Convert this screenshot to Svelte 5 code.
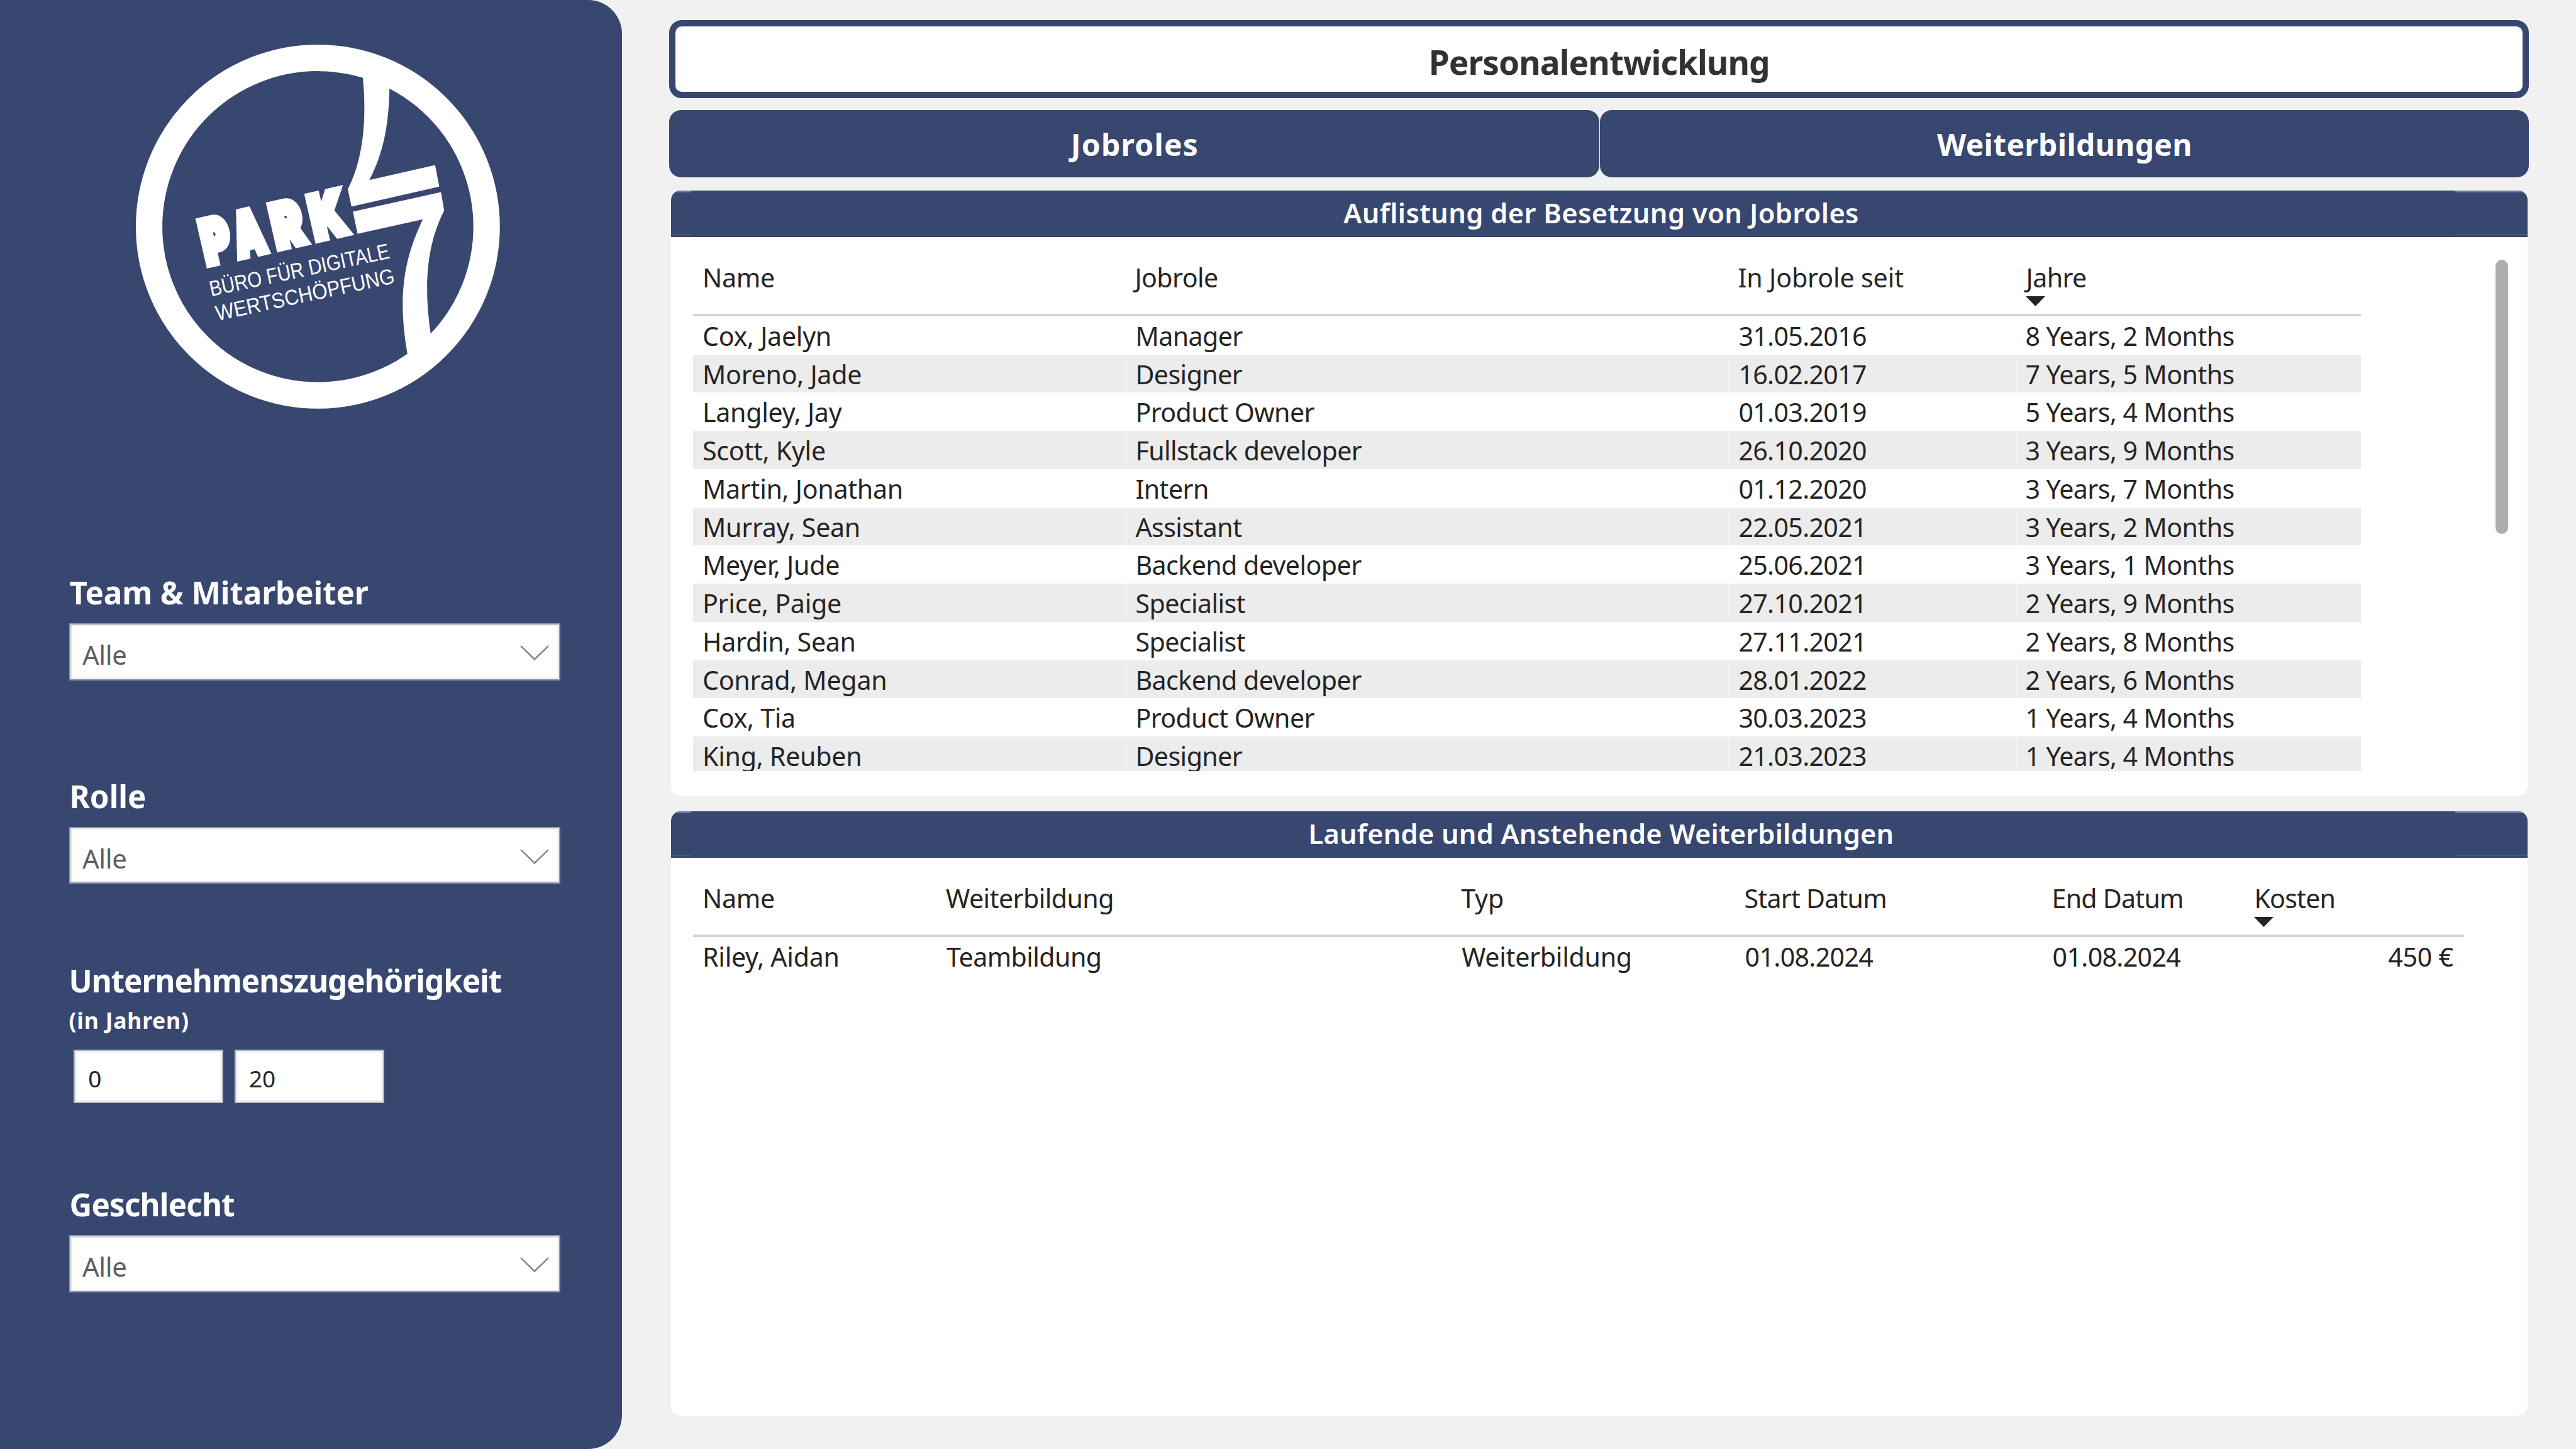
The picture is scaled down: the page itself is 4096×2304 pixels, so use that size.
<script>
  const jobroles = [
    ['Cox, Jaelyn', 'Manager', '31.05.2016', '8 Years, 2 Months'],
    ['Moreno, Jade', 'Designer', '16.02.2017', '7 Years, 5 Months'],
    ['Langley, Jay', 'Product Owner', '01.03.2019', '5 Years, 4 Months'],
    ['Scott, Kyle', 'Fullstack developer', '26.10.2020', '3 Years, 9 Months'],
    ['Martin, Jonathan', 'Intern', '01.12.2020', '3 Years, 7 Months'],
    ['Murray, Sean', 'Assistant', '22.05.2021', '3 Years, 2 Months'],
    ['Meyer, Jude', 'Backend developer', '25.06.2021', '3 Years, 1 Months'],
    ['Price, Paige', 'Specialist', '27.10.2021', '2 Years, 9 Months'],
    ['Hardin, Sean', 'Specialist', '27.11.2021', '2 Years, 8 Months'],
    ['Conrad, Megan', 'Backend developer', '28.01.2022', '2 Years, 6 Months'],
    ['Cox, Tia', 'Product Owner', '30.03.2023', '1 Years, 4 Months'],
    ['King, Reuben', 'Designer', '21.03.2023', '1 Years, 4 Months'],
  ];
  const trainings = [
    ['Riley, Aidan', 'Teambildung', 'Weiterbildung', '01.08.2024', '01.08.2024', '450 €'],
  ];
  const jobHead = ['Name', 'Jobrole', 'In Jobrole seit', 'Jahre'];
  const trainHead = ['Name', 'Weiterbildung', 'Typ', 'Start Datum', 'End Datum', 'Kosten'];
</script>

{#snippet dropdown()}
  <div class="select">
    <span>Alle</span>
    <svg class="chevron" viewBox="0 0 46 24"><path d="M1 1 L23 22.4 L45 1" /></svg>
  </div>
{/snippet}

{#snippet table(kind, head, rows)}
  <div class="table {kind}">
    <div class="row head">
      {#each head as label, i}
        <div class="cell">
          <span class="label">{label}</span>
          {#if i === head.length - 1}
            <svg class="sort" viewBox="0 0 31 16"><path d="M0 0H31L15.5 16Z" /></svg>
          {/if}
        </div>
      {/each}
    </div>
    <div class="body">
      {#each rows as row}
        <div class="row">
          {#each row as value}
            <div class="cell" class:num={/^\d\d\./.test(value)}>{value}</div>
          {/each}
        </div>
      {/each}
    </div>
  </div>
{/snippet}

<div class="page">
  <aside>
    <svg class="logo" viewBox="43 36 1484 1484">
      <circle cx="785" cy="778" r="688" fill="none" stroke="#fff" stroke-width="108" />
      <path d="M968 165 C986 345 968 510 907 625 L922 696 L1280 615 L1263 527 L995 588 C1050 480 1074 375 1077 212 L1040 150 Z" />
      <path d="M928 717 L1287 637 L1300 712 C1225 860 1217 1030 1246 1222 L1200 1320 L1151 1302 C1114 1090 1125 930 1213 748 L947 807 Z" />
      <text class="brand" transform="translate(329 933) rotate(-12.85)"><tspan x="3" textLength="114" lengthAdjust="spacingAndGlyphs">P</tspan><tspan x="137" textLength="122" lengthAdjust="spacingAndGlyphs">A</tspan><tspan x="298" textLength="124" lengthAdjust="spacingAndGlyphs">R</tspan><tspan x="458" textLength="140" lengthAdjust="spacingAndGlyphs">K</tspan></text>
      <text class="claim" transform="translate(350 1062) rotate(-12.05)" textLength="748" lengthAdjust="spacingAndGlyphs">BÜRO FÜR DIGITALE</text>
      <text class="claim" transform="translate(375 1162) rotate(-12.05)" textLength="744" lengthAdjust="spacingAndGlyphs">WERTSCHÖPFUNG</text>
    </svg>

    <section class="filter team">
      <h3>Team &amp; Mitarbeiter</h3>
      {@render dropdown()}
    </section>
    <section class="filter role">
      <h3>Rolle</h3>
      {@render dropdown()}
    </section>
    <section class="filter tenure">
      <h3>Unternehmenszugehörigkeit</h3>
      <p>(in Jahren)</p>
      <div class="range">
        <div class="input">0</div>
        <div class="input">20</div>
      </div>
    </section>
    <section class="filter gender">
      <h3>Geschlecht</h3>
      {@render dropdown()}
    </section>
  </aside>

  <main>
    <h1>Personalentwicklung</h1>
    <nav>
      <div class="tab active">Jobroles</div>
      <div class="tab">Weiterbildungen</div>
    </nav>
    <section class="panel first">
      <h2>Auflistung der Besetzung von Jobroles</h2>
      <div class="content">
        {@render table('jobs', jobHead, jobroles)}
        <div class="scrollbar"></div>
      </div>
    </section>
    <section class="panel second">
      <h2>Laufende und Anstehende Weiterbildungen</h2>
      <div class="content">
        {@render table('trainings', trainHead, trainings)}
      </div>
    </section>
  </main>
</div>

<style>
  :global(body) {
    background: #f1f1f1;
    overflow: hidden;
  }
  .page {
    display: flex;
    width: 4096px;
    height: 2304px;
    background: #f1f1f1;
    font-family: 'Noto Sans', 'Open Sans', sans-serif;
    color: #252423;
    overflow: hidden;
  }
  .page * {
    box-sizing: border-box;
  }
  h1, h2, h3, p {
    margin: 0;
    font-weight: 700;
    white-space: nowrap;
  }

  aside {
    display: flex;
    flex-direction: column;
    flex: none;
    width: 989px;
    height: 2304px;
    padding: 70.9px 98.4px 0 109.5px;
    background: #38476f;
    border-radius: 0 54px 54px 0;
    color: #fff;
  }
  .logo {
    display: block;
    flex: none;
    width: 578.8px;
    height: 578.8px;
    margin-left: 106.4px;
    fill: #fff;
  }
  .brand {
    font: 900 243px Inter, sans-serif;
    stroke: #fff;
    stroke-width: 32px;
  }
  .claim {
    font: 400 88px 'Liberation Sans', sans-serif;
  }

  .filter h3 {
    font-size: 49.3px;
    line-height: 60px;
    padding-left: 1px;
  }
  .team { margin-top: 262.4px; }
  .role { margin-top: 154px; }
  .tenure { margin-top: 123.3px; }
  .gender { margin-top: 130.6px; }
  .team h3 { letter-spacing: -0.1px; }
  .tenure h3 {
    padding-left: 0;
    letter-spacing: -1.05px;
  }
  .gender h3 { letter-spacing: -0.8px; }
  .tenure p {
    margin-top: 11.2px;
    font-size: 35.5px;
    letter-spacing: 0.8px;
    line-height: 44px;
  }
  .select {
    display: flex;
    align-items: flex-start;
    justify-content: space-between;
    height: 90.3px;
    margin-top: 19.4px;
    padding: 17px 16px 0 19.4px;
    background: #fff;
    border: 2.5px solid #8f98b2;
    box-shadow: inset 0 0 0 2.5px #ececec;
    color: #605e5c;
    font-size: 42px;
    letter-spacing: -0.4px;
    line-height: 62px;
  }
  .chevron {
    width: 46px;
    height: 24px;
    margin-top: 15.8px;
    fill: none;
    stroke: #7d7f80;
    stroke-width: 2.4;
  }
  .range {
    display: flex;
    gap: 17.4px;
    margin: 24.7px 0 0 7.7px;
  }
  .input {
    width: 238.3px;
    height: 85.7px;
    padding: 16px 0 0 21px;
    background: #fff;
    border: 2px solid #b4bacb;
    box-shadow: inset 0 0 0 2.5px #ececec;
    color: #252423;
    font-size: 37px;
    line-height: 55px;
  }

  main {
    display: flex;
    flex-direction: column;
    width: 2957.3px;
    margin-left: 75px;
    padding-top: 31.8px;
  }
  h1 {
    height: 124.7px;
    padding-top: 8px;
    border: 10px solid #38476f;
    border-radius: 20px;
    background: #fff;
    color: #323232;
    font-size: 53.2px;
    letter-spacing: -0.98px;
    line-height: 98px;
    text-align: center;
  }
  nav {
    display: flex;
    gap: 1.4px;
    margin-top: 18.2px;
  }
  .tab {
    flex: 1;
    height: 107.8px;
    border-radius: 19px;
    background: #38476f;
    color: #fff;
    font-size: 48px;
    font-weight: 700;
    letter-spacing: 0.3px;
    line-height: 110px;
    text-align: center;
  }
  .tab.active {
    padding-left: 2px;
    letter-spacing: 1.2px;
  }
  .panel {
    width: 2952px;
    margin-left: 3px;
    background: #fff;
    border-radius: 15px;
    overflow: hidden;
  }
  .first {
    height: 961.5px;
    margin-top: 20.8px;
  }
  .second {
    height: 960.5px;
    margin-top: 25.7px;
  }
  h2 {
    height: 73.6px;
    padding-left: 6px;
    background:
      linear-gradient(#4a587f, #4a587f) 0 69px / 32px 2px no-repeat,
      linear-gradient(#4a587f, #4a587f) 100% 69px / 115px 2px no-repeat,
      linear-gradient(#6f7c9e, #6f7c9e) 0 0 / 32px 3px no-repeat,
      linear-gradient(#6f7c9e, #6f7c9e) 100% 0 / 115px 3px no-repeat,
      #38476f;
    color: #fff;
    font-size: 43.4px;
    font-weight: 600;
    letter-spacing: 0.35px;
    line-height: 71px;
    text-align: center;
  }
  .second h2 { letter-spacing: 0.18px; }
  .content {
    display: flex;
    align-items: flex-start;
    justify-content: space-between;
    padding: 36px 30.7px 0 35px;
  }
  .scrollbar {
    width: 20.4px;
    height: 436px;
    border-radius: 10.2px;
    background: #adadac;
  }
  .row {
    display: grid;
  }
  .jobs .row { grid-template-columns: 689.4px 957px 458.1px 547.4px; }
  .trainings .row { grid-template-columns: 387.1px 817.1px 450.4px 491px 321.8px 348.4px; }
  .cell {
    padding: 0 17px 0 15px;
    font-size: 41.2px;
    letter-spacing: -0.3px;
    line-height: 63.5px;
    white-space: nowrap;
  }
  .cell:nth-child(2),
  .cell:nth-child(4) {
    letter-spacing: -0.6px;
  }
  .jobs .cell:nth-child(2) { padding-left: 13px; }
  .jobs .body .cell:nth-child(4) { padding-left: 13px; }
  .trainings .cell:nth-child(3),
  .trainings .cell:nth-child(4) {
    padding-left: 17px;
  }
  .body .num.cell { letter-spacing: -0.7px; }
  .trainings .head .cell:nth-child(n + 4) { letter-spacing: -0.8px; }
  .head .cell {
    height: 89.9px;
    border-bottom: 4.5px solid #d3d3d3;
    line-height: 57px;
  }
  .head .cell:nth-child(3) { letter-spacing: -0.15px; }
  .label {
    display: block;
    height: 57.8px;
  }
  .body {
    overflow: hidden;
  }
  .jobs .body { height: 722.9px; }
  .body .row {
    height: 60.77px;
  }
  .body .row:nth-child(even) {
    background: #ececec;
  }
  .body .cell + .cell {
    border-left: 1px solid #fff6;
  }
  .trainings .body .cell:last-child { text-align: right; }
  .sort {
    display: block;
    width: 31px;
    height: 16px;
    fill: #252423;
  }
</style>
